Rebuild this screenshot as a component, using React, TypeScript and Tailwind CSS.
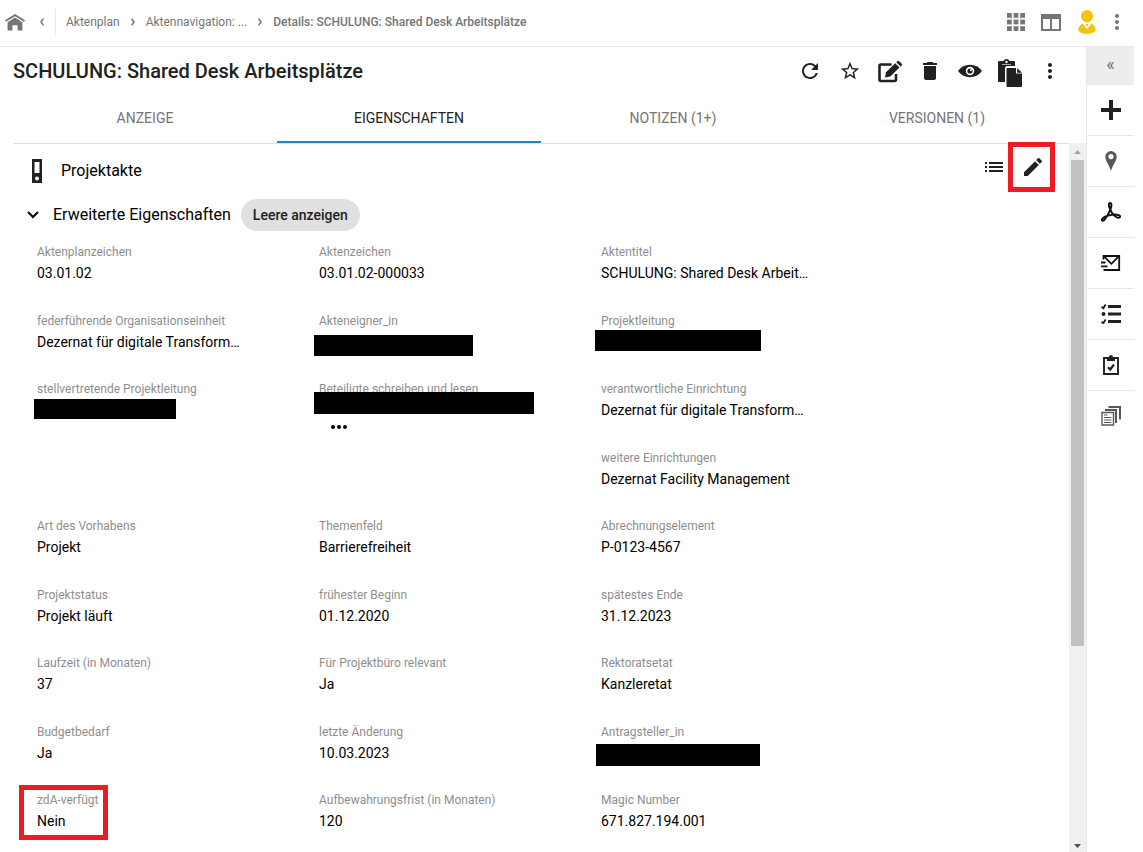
import type { ReactNode } from "react";
import { MdDelete, MdEdit, MdMoreVert, MdRefresh, MdStarBorder } from "react-icons/md";

type Redaction = { box: string; more?: boolean };

type Field = {
  label: string;
  value?: string;
  redaction?: Redaction;
  marked?: boolean;
};

type IconProps = { className?: string };

const HomeIcon = () => (
  <svg width="20" height="17" viewBox="0 0 20 17" fill="currentColor">
    <path d="M10 0L0 6.2l1 1.6 9-5.6 9 5.6 1-1.6z" />
    <path d="M10 3.6L2.6 8.3V16.5h4.8v-5.2h5.2v5.2h4.8V8.3z" />
  </svg>
);

const Chevron = ({ className }: IconProps) => (
  <svg width="4" height="8" viewBox="0 0 4 8" fill="none" className={className}>
    <path d="M.6.6L3 4 .6 7.4" stroke="currentColor" strokeWidth="1.5" />
  </svg>
);

const AppsIcon = () => (
  <svg width="18" height="18" viewBox="0 0 18 18" fill="currentColor">
    {[0, 6.6, 13.2].map((y) =>
      [0, 6.6, 13.2].map((x) => <rect key={`${x}-${y}`} x={x} y={y} width="4.8" height="4.8" />)
    )}
  </svg>
);

const ColumnsIcon = () => (
  <svg width="20" height="17" viewBox="0 0 20 17" fill="currentColor">
    <path d="M0 0h20v17H0zM2 5v10h7V5zm9 0v10h7V5z" fillRule="evenodd" />
  </svg>
);

const UserIcon = () => (
  <svg width="18" height="24" viewBox="0 0 18 24" fill="#f1c40f">
    <ellipse cx="9" cy="6.2" rx="6" ry="6.200" />
    <path d="M4.500 13.500L9 19l4.500-5.500c2.700 1.300 4.200 4 4.300 7C15.600 23 12.600 24 9 24S2.400 23 .2 20.500c.1-3 1.600-5.700 4.300-7z" />
    <path d="M7.600 14h2.800L9 16.800z" />
  </svg>
);

const FormEditIcon = () => (
  <svg width="25" height="24" viewBox="0 -2 25 24" fill="none">
    <path d="M13.500 3.500H3A1.500 1.500 0 0 0 1.500 5v13.500A1.500 1.500 0 0 0 3 20h13.500a1.500 1.500 0 0 0 1.500-1.500V13" stroke="currentColor" strokeWidth="2.600" />
    <path d="M7 16.500l1-5.200L17.200 2.200l4.300 4.200-9.200 9.200z" fill="currentColor" />
    <path d="M18.200 1.200l1-.8a1.700 1.700 0 0 1 2.300 0l2 2a1.700 1.700 0 0 1 0 2.300l-.9.900z" fill="currentColor" />
  </svg>
);

const EyeIcon = () => (
  <svg width="24" height="14" viewBox="0 0 24 14">
    <path d="M0 7C3 2.800 7.200.8 12 .8S21 2.800 24 7c-3 4.200-7.200 6.200-12 6.200S3 11.200 0 7z" fill="currentColor" />
    <circle cx="12" cy="7" r="4.200" fill="#fff" />
    <circle cx="12" cy="7" r="2.600" fill="currentColor" />
    <circle cx="13" cy="6" r="1" fill="#fff" />
  </svg>
);

const PasteIcon = () => (
  <svg width="24" height="32" viewBox="0 -4 24 32">
    <path d="M1 2h4.500a3.200 3.200 0 0 1 6 0H16a1 1 0 0 1 1 1v4H9.500A2.500 2.500 0 0 0 7 9.500V23H1a1 1 0 0 1-1-1V3a1 1 0 0 1 1-1z" fill="currentColor" />
    <circle cx="8.500" cy="3" r="1.200" fill="#fff" />
    <path d="M4 5.500h9" stroke="#aaa" strokeWidth="1" />
    <path d="M9 9h9v5.500h6V27a1 1 0 0 1-1 1H9.500a1 1 0 0 1-1-1V9.500z" fill="currentColor" />
    <path d="M19.200 9l4.800 4.700h-4.800z" fill="currentColor" />
  </svg>
);

const BinderIcon = () => (
  <svg width="12" height="24" viewBox="0 0 12 24">
    <path d="M1 0h10v24H1zM3.500 3v11h5V3z" fill="#212121" fillRule="evenodd" />
    <circle cx="6" cy="19.500" r="2" fill="#fff" />
  </svg>
);

const ListIcon = () => (
  <svg width="18" height="10" viewBox="0 0 18 10" fill="#212121" shapeRendering="crispEdges">
    <path d="M0 0h2v2H0zM0 4h2v2H0zM0 8h2v2H0zM4 0h14v2H4zM4 4h14v2H4zM4 8h14v2H4z" />
  </svg>
);

const ChevronDownIcon = () => (
  <svg width="12" height="8" viewBox="0 0 12 8" fill="none">
    <path d="M1 1l5 5 5-5" stroke="currentColor" strokeWidth="2" />
  </svg>
);

const PlusIcon = () => (
  <svg width="20" height="20" viewBox="0 0 20 20" fill="currentColor">
    <path d="M8 0h4v8h8v4h-8v8H8v-8H0V8h8z" />
  </svg>
);

const PinIcon = () => (
  <svg width="12" height="20" viewBox="0 0 12 20" fill="#58585c">
    <path d="M6 0a5.700 5.700 0 0 1 5.700 5.700C11.700 10 7.500 14 6 20 4.500 14 .3 10 .3 5.700A5.700 5.700 0 0 1 6 0zm0 3a2.600 2.600 0 1 0 0 5.200A2.600 2.600 0 0 0 6 3z" fillRule="evenodd" />
  </svg>
);

const AcrobatIcon = () => (
  <svg width="20" height="20" viewBox="0 0 20 20" fill="none" stroke="#111" strokeWidth="2">
    <path d="M9 6.500C7.400 4 7.500 1 9.100 1s1.700 3 .4 6c-1.500 4-4 8.500-6.300 11C1.500 19.600.3 18.400 1.100 17c1.200-2.300 7.500-4.500 12-4.600 4 0 6.500 1 5.900 2.500-.6 1.600-3.800.8-6-1.500-2-2-3.300-4.500-4-6.900z" />
  </svg>
);

const MailIcon = () => (
  <svg width="20" height="16" viewBox="0 0 20 16" fill="none" stroke="#111" strokeWidth="1.800">
    <path d="M2.500 4.500V1h15.700v14H2.500" />
    <path d="M2.800 1.200l7.600 7.600L18 1.200M0 7.500h4.500M0 11.300h6.500" />
  </svg>
);

const ChecklistIcon = () => (
  <svg width="20" height="20" viewBox="0 0 20 20" fill="none" stroke="currentColor">
    <path d="M7 2.500h13M7 10h13M7 17.500h13" strokeWidth="3" />
    <path d="M.5 2.800l1.800 1.500L4.600.5M.5 17.800l1.800 1.500 2.300-3.800" strokeWidth="1.800" />
    <circle cx="2.500" cy="10" r="2" fill="currentColor" stroke="none" />
  </svg>
);

const ClipboardIcon = () => (
  <svg width="16" height="20" viewBox="0 0 16 20" fill="none" stroke="currentColor">
    <path d="M1 3h14v16H1z" strokeWidth="1.900" />
    <path d="M4 2h2a2 2 0 0 1 4 0h2v4H4z" fill="currentColor" stroke="none" />
    <path d="M5 12.200l2.200 2.300L11 9.500" strokeWidth="2.200" />
  </svg>
);

const DocumentsIcon = () => (
  <svg width="20" height="22" viewBox="0 0 20 22" fill="none" stroke="#58585c">
    <path d="M1 6.500h11.500V19H1z" strokeWidth="1.400" />
    <path d="M4 4h11v13M7.500 1H19v12.500" strokeWidth="2" />
    <path d="M3 9h3.500M3 11.500h7.500M3 14h7.500M3 16.500h7.500" strokeWidth="1.200" />
  </svg>
);

const crumbs = ["Aktenplan", "Aktennavigation: ..."];

const tabs = ["ANZEIGE", "EIGENSCHAFTEN", "NOTIZEN (1+)", "VERSIONEN (1)"];

const actions: { label: string; icon: ReactNode }[] = [
  { label: "Aktualisieren", icon: <MdRefresh size={24} /> },
  { label: "Favorit", icon: <MdStarBorder size={22} /> },
  { label: "Formular bearbeiten", icon: <FormEditIcon /> },
  { label: "Löschen", icon: <MdDelete size={24} /> },
  { label: "Beobachten", icon: <EyeIcon /> },
  { label: "Einfügen", icon: <PasteIcon /> },
  { label: "Weitere Aktionen", icon: <MdMoreVert size={24} /> },
];

const railItems: { label: string; icon: ReactNode }[] = [
  { label: "Hinzufügen", icon: <PlusIcon /> },
  { label: "Standort", icon: <PinIcon /> },
  { label: "PDF", icon: <AcrobatIcon /> },
  { label: "Senden", icon: <MailIcon /> },
  { label: "Aufgaben", icon: <ChecklistIcon /> },
  { label: "Prüfen", icon: <ClipboardIcon /> },
  { label: "Dokumente", icon: <DocumentsIcon /> },
];

// null leaves a grid cell empty
const fields: (Field | null)[] = [
  { label: "Aktenplanzeichen", value: "03.01.02" },
  { label: "Aktenzeichen", value: "03.01.02-000033" },
  { label: "Aktentitel", value: "SCHULUNG: Shared Desk Arbeit…" },
  { label: "federführende Organisationseinheit", value: "Dezernat für digitale Transform…" },
  { label: "Akteneigner_in", redaction: { box: "-left-[5px] top-[23px] w-[159px] h-[21px]" } },
  { label: "Projektleitung", redaction: { box: "-left-[6px] top-[18px] w-[166px] h-[21px]" } },
  { label: "stellvertretende Projektleitung", redaction: { box: "-left-[3px] top-[19px] w-[142px] h-[20px]" } },
  {
    label: "Beteiligte schreiben und lesen",
    redaction: { box: "-left-[5px] top-[12px] w-[220px] h-[22px]", more: true },
  },
  { label: "verantwortliche Einrichtung", value: "Dezernat für digitale Transform…" },
  null,
  null,
  { label: "weitere Einrichtungen", value: "Dezernat Facility Management" },
  { label: "Art des Vorhabens", value: "Projekt" },
  { label: "Themenfeld", value: "Barrierefreiheit" },
  { label: "Abrechnungselement", value: "P-0123-4567" },
  { label: "Projektstatus", value: "Projekt läuft" },
  { label: "frühester Beginn", value: "01.12.2020" },
  { label: "spätestes Ende", value: "31.12.2023" },
  { label: "Laufzeit (in Monaten)", value: "37" },
  { label: "Für Projektbüro relevant", value: "Ja" },
  { label: "Rektoratsetat", value: "Kanzleretat" },
  { label: "Budgetbedarf", value: "Ja" },
  { label: "letzte Änderung", value: "10.03.2023" },
  { label: "Antragsteller_in", redaction: { box: "-left-[5px] top-[21px] w-[164px] h-[22px]" } },
  { label: "zdA-verfügt", value: "Nein", marked: true },
  { label: "Aufbewahrungsfrist (in Monaten)", value: "120" },
  { label: "Magic Number", value: "671.827.194.001" },
];

function TopBar() {
  return (
    <header className="flex h-[47px] shrink-0 items-center border-b border-[#e8e8e8] pb-0.5 text-[#757575]">
      <a href="#home" aria-label="Startseite" className="ml-[5px]">
        <HomeIcon />
      </a>
      <button type="button" aria-label="Zurück" className="ml-[10px] flex w-[14px] justify-center">
        <Chevron className="rotate-180" />
      </button>
      <nav className="ml-1.5 flex h-[26px] items-center border-l border-[#e8e8e8] pl-[10px] text-xs">
        {crumbs.map((crumb) => (
          <span key={crumb} className="flex items-center">
            <a href="#crumb">{crumb}</a>
            <Chevron className="mx-[11px]" />
          </span>
        ))}
        <span className="font-medium">Details: SCHULUNG: Shared Desk Arbeitsplätze</span>
      </nav>
      <div className="ml-auto flex items-center">
        <button type="button" aria-label="Apps" className="mr-4">
          <AppsIcon />
        </button>
        <button type="button" aria-label="Layout" className="mr-[17px]">
          <ColumnsIcon />
        </button>
        <button type="button" aria-label="Benutzer" className="mr-[9px]">
          <UserIcon />
        </button>
        <button type="button" aria-label="Mehr" className="mr-[5px]">
          <MdMoreVert size={24} />
        </button>
      </div>
    </header>
  );
}

function FieldCell({ field }: { field: Field }) {
  const { label, value, redaction, marked } = field;
  return (
    <div className="relative">
      <dt className="text-xs leading-[18px] text-[#8e8e8e]">{label}</dt>
      <dd className="h-6 text-sm leading-6">{value}</dd>
      {redaction && <div className={`absolute bg-black ${redaction.box}`} />}
      {redaction?.more && (
        <button type="button" aria-label="Mehr anzeigen" className="absolute left-3 top-[45px] flex gap-[2px]">
          <span className="size-1 rounded-full bg-black" />
          <span className="size-1 rounded-full bg-black" />
          <span className="size-1 rounded-full bg-black" />
        </button>
      )}
      {marked && <div className="absolute -left-[18px] -top-[6px] h-[55px] w-[89px] border-5 border-[#ed1c24]" />}
    </div>
  );
}

function Scrollbar() {
  return (
    <div className="flex w-[17px] shrink-0 flex-col items-center bg-[#f0f0f0]">
      <svg width="17" height="17" viewBox="0 0 17 17">
        <path d="M5 11l3.500-4 3.500 4z" fill="#a3a3a3" />
      </svg>
      <div className="flex w-full flex-1 flex-col items-center">
        <div className="h-[72%] w-[13px] bg-[#c1c1c1]" />
      </div>
      <svg width="17" height="17" viewBox="0 0 17 17">
        <path d="M5 9l3.500 4L12 9z" fill="#505050" />
      </svg>
    </div>
  );
}

function SideRail() {
  return (
    <aside className="flex w-12 shrink-0 flex-col border-l border-[#e8e8e8]">
      <button
        type="button"
        aria-label="Ausklappen"
        className="h-[38px] bg-[#ededed] pb-1 text-lg leading-8 text-[#757575]"
      >
        «
      </button>
      {railItems.map((item, i) => (
        <button
          key={item.label}
          type="button"
          aria-label={item.label}
          className={`flex h-[51px] items-center justify-center ${i < railItems.length - 1 ? "border-b border-[#e8e8e8]" : ""}`}
        >
          {item.icon}
        </button>
      ))}
    </aside>
  );
}

export default function App() {
  return (
    <div className="flex h-screen flex-col overflow-hidden bg-white pr-[9px] font-[Roboto,sans-serif] text-[#212121]">
      <TopBar />
      <div className="flex min-h-0 flex-1">
        <main className="flex min-w-0 flex-1 flex-col">
          <div className="flex h-12 shrink-0 items-center pl-[13px] pr-4">
            <h1 className="flex-1 truncate text-xl font-medium">SCHULUNG: Shared Desk Arbeitsplätze</h1>
            {actions.map((action) => (
              <button
                key={action.label}
                type="button"
                aria-label={action.label}
                className="flex size-10 items-center justify-center"
              >
                {action.icon}
              </button>
            ))}
          </div>

          <div role="tablist" className="ml-[13px] mr-[17px] flex h-12 shrink-0">
            {tabs.map((tab) => {
              const active = tab === "EIGENSCHAFTEN";
              return (
                <button
                  key={tab}
                  type="button"
                  role="tab"
                  aria-selected={active}
                  className={`flex-1 border-b-2 text-sm ${
                    active ? "border-[#1e88c7]" : "border-transparent text-[#757575]"
                  }`}
                >
                  {tab}
                </button>
              );
            })}
          </div>

          <div className="flex min-h-0 flex-1">
            <div className="ml-[13px] min-w-0 flex-1 border-t border-[#e0e0e0] text-black">
              <div className="flex h-[53px] items-center pl-[18px]">
                <BinderIcon />
                <h2 className="ml-[18px] flex-1 text-base">Projektakte</h2>
                <button type="button" aria-label="Liste" className="mr-[18px] -mt-2">
                  <ListIcon />
                </button>
                <div className="relative -mt-2 mr-6 flex size-6 items-center justify-center">
                  <button type="button" aria-label="Bearbeiten" className="text-[#212121]">
                    <MdEdit size={24} />
                  </button>
                  <div className="absolute -left-[13px] -top-[13px] h-[50px] w-[47px] border-5 border-[#ed1c24]" />
                </div>
              </div>

              <div className="flex h-9 items-center pl-[14px]">
                <button type="button" className="flex items-center text-base">
                  <ChevronDownIcon />
                  <span className="ml-[14px]">Erweiterte Eigenschaften</span>
                </button>
                <button
                  type="button"
                  className="ml-[10px] h-8 rounded-full bg-[#e0e0e0] px-3 text-sm font-medium text-[#212121]"
                >
                  Leere anzeigen
                </button>
              </div>

              <dl className="mr-[186px] mt-[10px] grid auto-rows-[69px_68px] grid-cols-3 pl-6">
                {fields.map((field, i) => (field ? <FieldCell key={field.label} field={field} /> : <div key={i} />))}
              </dl>
            </div>
            <Scrollbar />
          </div>
        </main>
        <SideRail />
      </div>
    </div>
  );
}
